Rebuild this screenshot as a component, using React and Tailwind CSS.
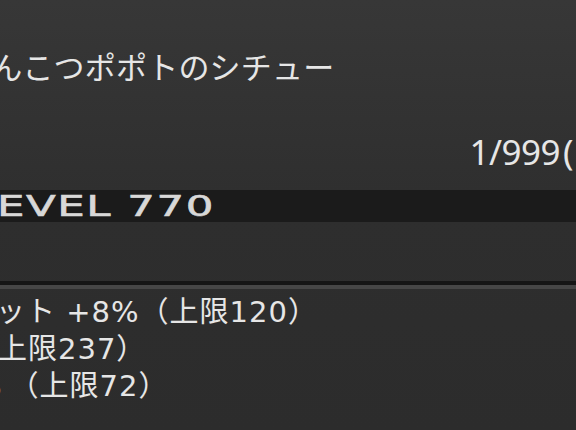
import React from 'react';

const jp = { fontFamily: '"Noto Sans CJK JP", "Noto Sans", sans-serif' };
const statFont = { fontFamily: '"DejaVu Sans", "Noto Sans CJK JP", sans-serif' };

const App = () => {
  return (
    <div className="w-[576px] h-[430px] overflow-hidden bg-gradient-to-b from-[#373737] via-[#2e2e2e] to-[#2c2c2c] text-[#e6e6e6]" style={jp}>
      {/* item name */}
      <div className="pt-[44px] whitespace-nowrap">
        <div className="ml-[-40px] text-[31px] leading-[44px] tracking-[0.2px]">げんこつポポトのシチュー</div>
      </div>

      {/* stack count */}
      <div className="mt-[40px] flex justify-end whitespace-nowrap">
        <div className="mr-[3px] text-[35px] leading-[48px] tracking-[-0.5px]" style={{ fontFamily: '"Noto Sans", sans-serif' }}>
          1/999<span className="ml-[3px]">(</span>
        </div>
      </div>

      {/* item level band */}
      <div className="mt-[14px] h-[32px] bg-[#1b1b1b] flex items-center overflow-hidden whitespace-nowrap">
        <div
          className="ml-[-3px] text-[29px] leading-none text-[#d8d8d8] tracking-[1px] origin-left scale-x-[1.5] [-webkit-text-stroke:0.6px_#d8d8d8]"
          style={{ fontFamily: '"DejaVu Sans", sans-serif' }}
        >
          EVEL 770
        </div>
      </div>

      <div className="h-[59px]" />

      {/* divider */}
      <div className="h-[4px] bg-[#151515]" />
      <div className="h-[4px] bg-[#464646]" />

      {/* bonuses */}
      <div className="pt-[5px] flex flex-col whitespace-nowrap text-[29px] leading-[37px] tracking-[1px]" style={statFont}>
        <div className="ml-[-4px]">ット +8%（上限120）</div>
        <div className="ml-[-2px]">上限237）</div>
        <div className="ml-[-26px]">
          <span className="mr-[7px]">%</span>（上限72）
        </div>
      </div>
    </div>
  );
};

export default App;
